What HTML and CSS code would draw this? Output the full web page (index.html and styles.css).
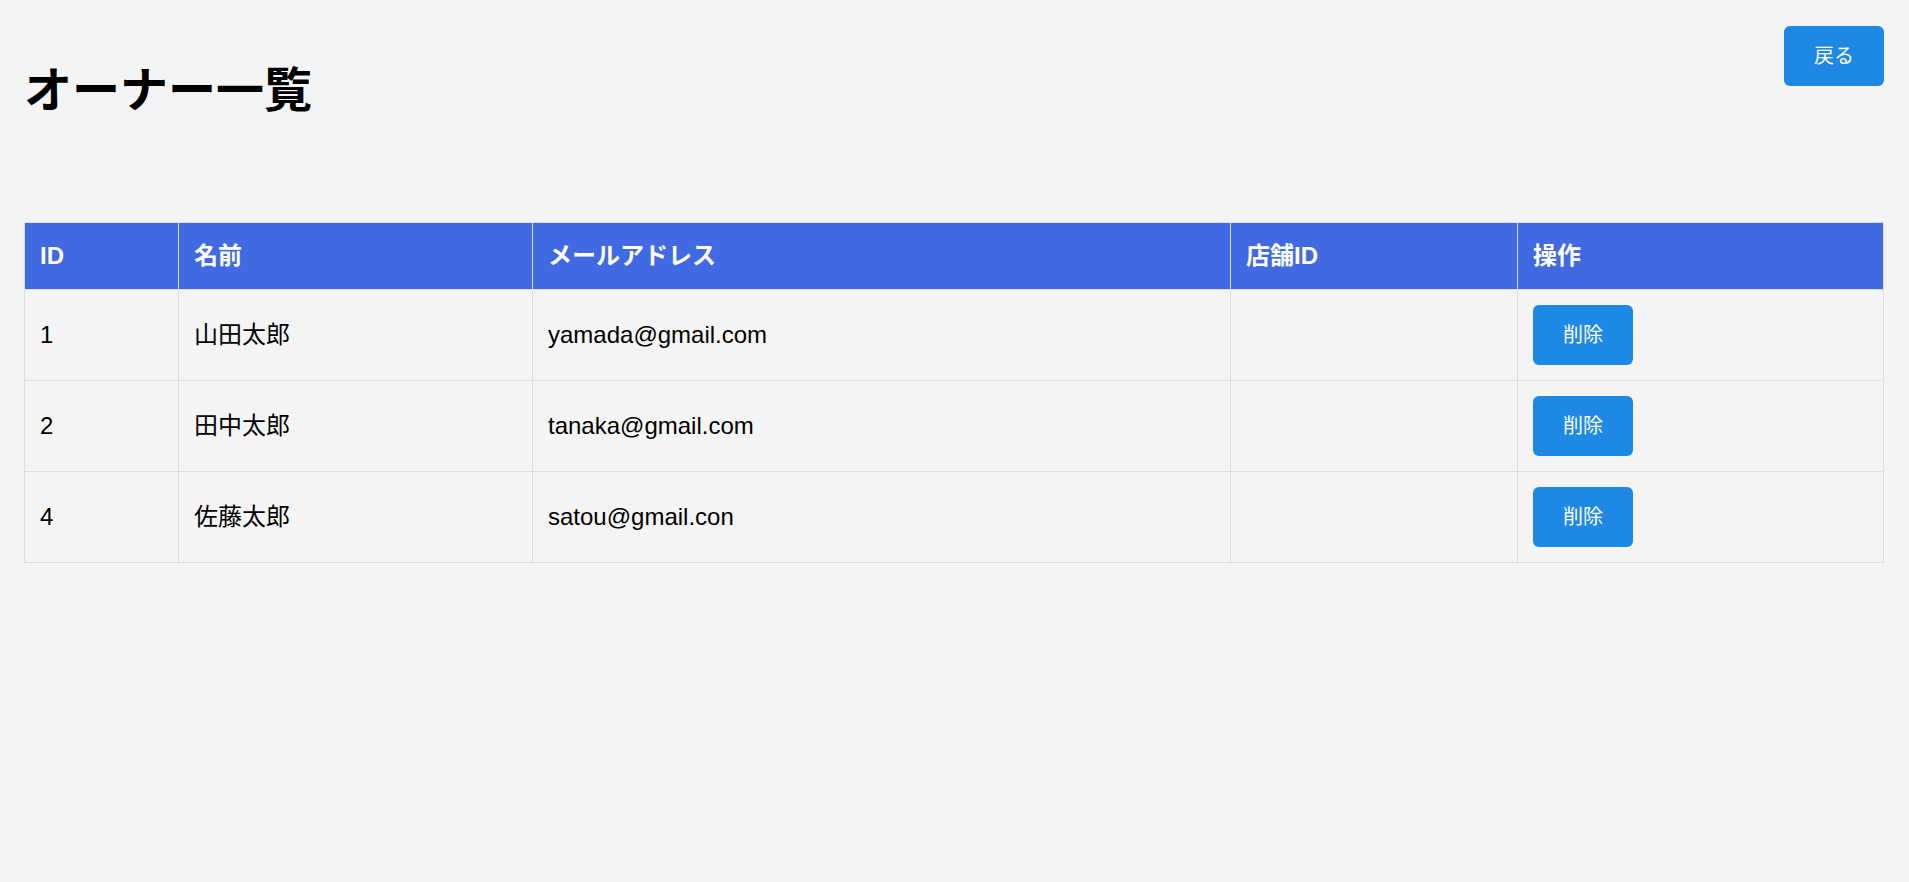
FILE: index.html
```html
<!DOCTYPE html>
<html lang="ja">
<head>
<meta charset="utf-8">
<title>オーナー一覧</title>
<link rel="stylesheet" href="styles.css">
</head>
<body>
<div class="page">
  <header class="top">
    <h1 class="title">オーナー一覧</h1>
    <button class="btn back-btn" type="button">戻る</button>
  </header>
  <table class="owners">
    <colgroup>
      <col class="c-id">
      <col class="c-name">
      <col class="c-mail">
      <col class="c-shop">
      <col class="c-op">
    </colgroup>
    <thead>
      <tr><th>ID</th><th>名前</th><th>メールアドレス</th><th>店舗ID</th><th>操作</th></tr>
    </thead>
    <tbody>
      <tr><td>1</td><td>山田太郎</td><td>yamada@gmail.com</td><td></td><td><button class="btn del-btn" type="button">削除</button></td></tr>
      <tr><td>2</td><td>田中太郎</td><td>tanaka@gmail.com</td><td></td><td><button class="btn del-btn" type="button">削除</button></td></tr>
      <tr><td>4</td><td>佐藤太郎</td><td>satou@gmail.con</td><td></td><td><button class="btn del-btn" type="button">削除</button></td></tr>
    </tbody>
  </table>
</div>
</body>
</html>
```

FILE: styles.css
```css
html, body {
  margin: 0;
  padding: 0;
  background: #f4f4f4;
}
body {
  font-family: "Liberation Sans", Arial, "Noto Sans CJK JP", sans-serif;
  color: #000;
}
.page {
  padding: 26px 25px 24px 24px;
}
.top {
  display: flex;
  justify-content: space-between;
  align-items: flex-start;
}
.title {
  margin: 24px 0 100px 0;
  font-size: 48px;
  line-height: 72px;
  font-weight: 700;
  font-family: "Noto Sans CJK JP", sans-serif;
}
.btn {
  font-family: "Noto Sans CJK JP", sans-serif;
  font-size: 20px;
  color: #fff;
  background: #1e88e5;
  border: none;
  border-radius: 6px;
  width: 100px;
  height: 60px;
  padding: 0 0 3px 0;
  cursor: pointer;
}
.owners {
  width: 100%;
  border-collapse: collapse;
  table-layout: fixed;
  font-size: 24px;
  line-height: 36px;
}
.c-id { width: 154px; }
.c-name { width: 354px; }
.c-mail { width: 698px; }
.c-shop { width: 287px; }
.owners th,
.owners td {
  border: 1px solid #dddddd;
  padding: 15px;
  text-align: left;
  vertical-align: middle;
}
.owners th {
  background: #4169e1;
  color: #fff;
  font-weight: 700;
}
.del-btn {
  display: block;
}
```
